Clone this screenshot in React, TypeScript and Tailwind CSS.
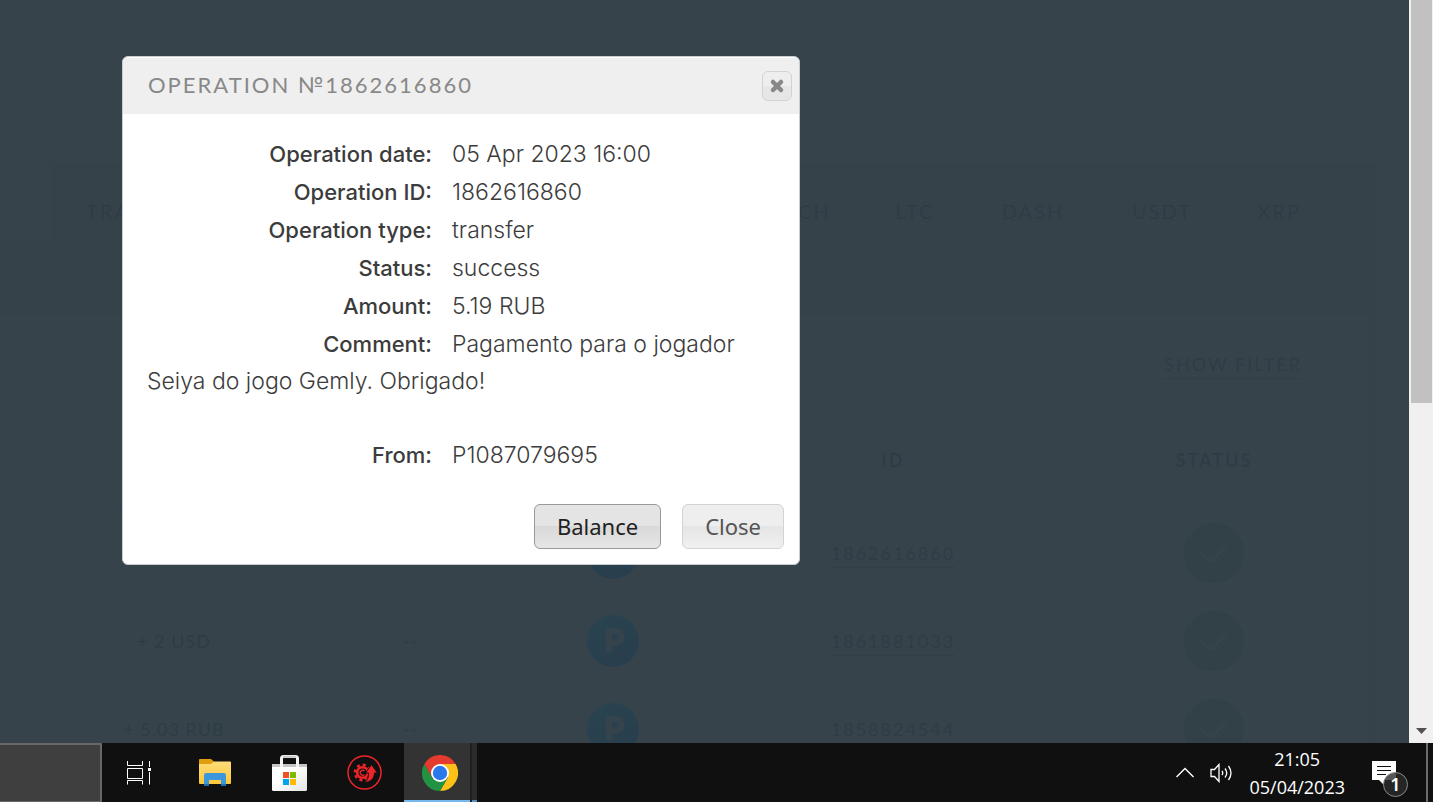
import React from 'react';

const tabs = [
  { label: 'BCH', width: 'w-[124px]' },
  { label: 'LTC', width: 'w-[92px]' },
  { label: 'DASH', width: 'w-[144px]' },
  { label: 'USDT', width: 'w-[114px]' },
  { label: 'XRP', width: 'w-[120px]' }
];

const rows = [
  { amount: '+ 5.19 RUB', id: '1862616860' },
  { amount: '+ 2 USD', id: '1861881033' },
  { amount: '+ 5.03 RUB', id: '1858824544' }
];

const details = [
  { label: 'Operation date:', value: '05 Apr 2023 16:00' },
  { label: 'Operation ID:', value: '1862616860' },
  { label: 'Operation type:', value: 'transfer' },
  { label: 'Status:', value: 'success' },
  { label: 'Amount:', value: '5.19 RUB' },
  { label: 'Comment:', value: 'Pagamento para o jogador' }
];

const Detail: React.FC<{ label: string; value: string }> = ({ label, value }) => (
  <div className="flex">
    <dt className="w-[285px] mr-5 text-right text-[22px] font-medium">{label}</dt>
    <dd>{value}</dd>
  </div>
);

const History: React.FC = () => (
  <div className="flex-1 min-w-0 overflow-hidden pt-[163px] pr-[31px] bg-[#37434b] font-['Lato',sans-serif] text-[#303c45]">
    <div className="rounded-tr-lg bg-[#36424a]">
      <div className="flex items-start h-[152px]">
        <div className="w-[52px] h-[78px] rounded-tr-lg bg-[#37434b]" />
        <nav className="flex flex-1 justify-between h-24 items-center pl-[34px] pr-[39px] text-[20px] tracking-[2px]">
          <a href="#transactions">TRANSACTIONS</a>
          <div className="flex text-center">
            {tabs.map((tab) => (
              <a key={tab.label} href={`#${tab.label}`} className={tab.width}>{tab.label}</a>
            ))}
          </div>
        </nav>
      </div>
      <div className="mr-2 pl-[52px] pr-[34px] bg-[#37434b]">
        <div className="flex justify-end h-[98px] items-center pr-[34px]">
          <a href="#filter" className="text-[18px] leading-7 tracking-[2px] border-b border-dotted border-[#2f3a42]">SHOW FILTER</a>
        </div>
        <table className="w-full table-fixed text-center text-[18px] tracking-[2px]">
          <colgroup>
            <col className="w-[19%]" />
            <col className="w-[18%]" />
            <col className="w-[13%]" />
            <col className="w-[31%]" />
            <col className="w-[19%]" />
          </colgroup>
          <thead>
            <tr className="h-24 border-b border-[#35414a]">
              <th />
              <th />
              <th />
              <th>ID</th>
              <th>STATUS</th>
            </tr>
          </thead>
          <tbody>
            {rows.map((row) => (
              <tr key={row.id} className="h-[88px]">
                <td className="tracking-[1px] text-[#2e3d44]">{row.amount}</td>
                <td>--</td>
                <td className="pl-1">
                  <svg className="mx-auto" width="52" height="52" viewBox="0 0 52 52">
                    <defs>
                      <linearGradient id="coin" x1="0" y1="0" x2="0.6" y2="1">
                        <stop offset="0" stopColor="#294450" />
                        <stop offset="1" stopColor="#293e4e" />
                      </linearGradient>
                    </defs>
                    <circle cx="26" cy="26" r="26" fill="url(#coin)" />
                    <path d="M18.500 13h10a8.500 8.500 0 0 1 0 18H25v6h-6.500zM25 19v6h3a3 3 0 0 0 0-6z" fill="#35434d" fillRule="evenodd" />
                  </svg>
                </td>
                <td>
                  <a href={`#${row.id}`} className="inline-block leading-7 border-b border-dotted border-[#2f3a42]">{row.id}</a>
                </td>
                <td>
                  <svg className="mx-auto" width="60" height="60" viewBox="0 0 60 60">
                    <circle cx="30" cy="30" r="30" fill="#324047" />
                    <path d="M17 30l10 9 15-16" fill="none" stroke="#36434a" strokeWidth="3" strokeLinecap="round" strokeLinejoin="round" />
                  </svg>
                </td>
              </tr>
            ))}
          </tbody>
        </table>
      </div>
    </div>
  </div>
);

const OperationDialog: React.FC = () => (
  <div role="dialog" aria-labelledby="dialog-title" className="absolute left-[122px] top-[56px] w-[678px] rounded-md border border-[#c9cccf] bg-white overflow-hidden">
    <div className="flex items-center justify-between h-14 mt-px pl-[25px] pr-[7px] bg-[#efefef]">
      <h2 id="dialog-title" className="pb-[3px] font-['Lato',sans-serif] text-[22px] tracking-[2px] text-[#888]">OPERATION №1862616860</h2>
      <button aria-label="close" className="flex items-center justify-center w-[30px] h-[30px] rounded-md border border-[#d3d3d3] bg-linear-to-b from-[#eee] from-50% to-[#e6e6e6] to-50%">
        <svg width="16" height="16" viewBox="0 0 16 16">
          <path d="M4 4l8 8M12 4l-8 8" stroke="#888" strokeWidth="4.500" strokeLinecap="round" />
        </svg>
      </button>
    </div>
    <dl className="px-6 pt-[22px] pb-[30px] space-y-px font-['Inter',sans-serif] text-[23px] leading-[37px] font-light text-[#3c3c3c]">
      {details.map((detail) => (
        <Detail key={detail.label} label={detail.label} value={detail.value} />
      ))}
      <dd className="-mt-px">Seiya do jogo Gemly. Obrigado!</dd>
      <div className="pt-9">
        <Detail label="From:" value="P1087079695" />
      </div>
    </dl>
    <div className="flex justify-end gap-[21px] pr-[15px] pb-[15px] font-['Noto_Sans',sans-serif] text-[22px] leading-[43px]">
      <button className="px-[22px] rounded-md border border-[#999] bg-linear-to-b from-[#e4e4e4] from-50% via-[#d9d9d9] via-50% to-[#e6e6e6] text-[#212121]">Balance</button>
      <button className="px-[22px] rounded-md border border-[#d3d3d3] bg-linear-to-b from-[#eee] from-50% via-[#e5e5e5] via-50% to-[#f0f0f0] text-[#555]">Close</button>
    </div>
  </div>
);

const Scrollbar: React.FC = () => (
  <div className="flex flex-col justify-between items-center w-6 pl-px bg-[#f0f0f0]">
    <div className="w-[21px] h-[403px] bg-[#c1c1c1]" />
    <svg className="mb-[9px]" width="11" height="6" viewBox="0 0 11 6">
      <path d="M0 0h11L5.500 6z" fill="#505050" />
    </svg>
  </div>
);

const TaskViewIcon = () => (
  <svg width="26" height="24" viewBox="0 0 26 24" fill="none" stroke="#fff">
    <path d="M.5 0v4.500h15V0M.5 7.500h15v10H.5zM.5 23.500v-4h15v4M22.500 0v6M22.500 11v12.500" />
    <path d="M21 7h3v3h-3z" fill="#fff" stroke="none" />
  </svg>
);

const FolderIcon = () => (
  <svg width="32" height="28" viewBox="0 0 32 28">
    <defs>
      <linearGradient id="folder" x1="0" y1="0" x2="0" y2="1">
        <stop offset="0" stopColor="#ffdc7a" />
        <stop offset="1" stopColor="#fcc839" />
      </linearGradient>
    </defs>
    <path d="M1 0h11l3 2.500V6H0V1a1 1 0 0 1 1-1z" fill="#e09f0a" />
    <path d="M0 5h12l3-2.500h16a1 1 0 0 1 1 1V24a1 1 0 0 1-1 1H1a1 1 0 0 1-1-1z" fill="url(#folder)" />
    <path d="M7 14h18a2 2 0 0 1 2 2v11h-5v-6H10v6H5V16a2 2 0 0 1 2-2z" fill="#3c97dd" />
    <path d="M5 25h5v2H5zM22 25h5v2h-5z" fill="#1b6fb2" />
  </svg>
);

const StoreIcon = () => (
  <svg width="35" height="36" viewBox="0 0 35 36">
    <defs>
      <linearGradient id="bag" x1="0" y1="0" x2="1" y2="1">
        <stop offset="0.4" stopColor="#fff" />
        <stop offset="1" stopColor="#e3e3e3" />
      </linearGradient>
    </defs>
    <path d="M0 9h35v25.500a1.500 1.500 0 0 1-1.500 1.500h-32A1.500 1.500 0 0 1 0 34.500z" fill="url(#bag)" />
    <path d="M0 9h35v3H0z" fill="#c6c6c6" />
    <path d="M9.500 12V3.500a2 2 0 0 1 2-2h12a2 2 0 0 1 2 2V12" fill="none" stroke="#f3f3f3" strokeWidth="3" />
    <path d="M11 .8h13v2H11z" fill="#c9c9c9" />
    <path d="M11 17h6v6h-6z" fill="#f25022" />
    <path d="M18 17h6v6h-6z" fill="#7fba00" />
    <path d="M11 24h6v6h-6z" fill="#00a4ef" />
    <path d="M18 24h6v6h-6z" fill="#ffb900" />
  </svg>
);

const UpdaterIcon = () => (
  <svg width="35" height="35" viewBox="0 0 35 35">
    <circle cx="17.500" cy="17.500" r="16.500" fill="none" stroke="#ee2429" strokeWidth="1.500" />
    <circle cx="15.500" cy="17.500" r="5.300" fill="none" stroke="#ee2429" strokeWidth="2.600" />
    <circle cx="15.500" cy="17.500" r="7.600" fill="none" stroke="#ee2429" strokeWidth="2.600" strokeDasharray="3 2.970" />
    <path d="M17.500 19.500a2.500 2.500 0 1 1 0-3.500" fill="none" stroke="#ee2429" strokeWidth="1.400" />
    <path d="M17 27.500c3.500-2 4.500-5 4.500-9.500h-3l6-8.500 6 8.500h-3c0 5.500-4 9.500-10.500 9.500z" fill="#ee2429" stroke="#101010" strokeWidth="1" />
  </svg>
);

const ChromeIcon = () => (
  <svg width="36" height="36" viewBox="0 0 36 36">
    <path d="M18 9h15.600A18 18 0 0 1 18 36l7.800-13.500z" fill="#fcc117" />
    <path d="M2.400 9l7.800 13.500L18 27l7.800-4.500L18 36A18 18 0 0 1 2.400 9z" fill="#229342" />
    <path d="M10.200 22.500L2.400 9A18 18 0 0 1 33.600 9H18z" fill="#e33b2e" />
    <circle cx="18" cy="18" r="9" fill="#fff" />
    <circle cx="18" cy="18" r="7.200" fill="#2a79ea" />
  </svg>
);

const taskbarIcons = [
  { name: 'Task View', icon: <TaskViewIcon /> },
  { name: 'File Explorer', icon: <FolderIcon /> },
  { name: 'Microsoft Store', icon: <StoreIcon /> },
  { name: 'Driver Booster', icon: <UpdaterIcon /> }
];

const Taskbar: React.FC = () => (
  <div className="flex h-[59px] bg-[#101010]">
    <div className="w-[102px] border-t-2 border-r-2 border-b border-[#686868] bg-[#3f3f3f]" />
    {taskbarIcons.map((item) => (
      <button key={item.name} aria-label={item.name} className="flex items-center justify-center w-[75px]">
        {item.icon}
      </button>
    ))}
    <div className="flex gap-0.5 ml-0.5 bg-[#202020]">
      <button aria-label="Google Chrome" className="flex items-center justify-center w-[66px] pl-[6px] pt-0.5 bg-[#333] border-b-2 border-[#76b9ed]">
        <ChromeIcon />
      </button>
      <div className="w-[5px] bg-[#2b2b2b] border-b-2 border-[#5a8db5]" />
    </div>
    <div className="flex items-center ml-auto">
      <button aria-label="Show hidden icons" className="mr-4">
        <svg width="18" height="11" viewBox="0 0 18 11">
          <path d="M.5 10L9 1.500l8.500 8.500" fill="none" stroke="#fff" strokeWidth="1.400" />
        </svg>
      </button>
      <button aria-label="Volume" className="mr-[15px]">
        <svg width="24" height="20" viewBox="0 0 24 20" fill="none" stroke="#fff" strokeWidth="1.300">
          <path d="M1 6.500h3.500L9 1.500v17L4.500 13.500H1z" />
          <path d="M12 8q1.500 2 0 4M15 5.500q3.500 4.500 0 9M18.500 3q5 7 0 14" />
        </svg>
      </button>
      <div className="mr-[27px] text-center font-['Open_Sans',sans-serif] text-[18px] leading-7 text-white">
        <div>21:05</div>
        <div>05/04/2023</div>
      </div>
      <button aria-label="Notifications" className="relative mr-[30px]">
        <svg width="24" height="24" viewBox="0 0 24 24">
          <path d="M0 0h24v19H12v5l-5-5H0z" fill="#fff" />
          <path d="M5 5.500h14M5 9.500h14M5 13.500h9" stroke="#101010" />
        </svg>
        <span className="absolute left-[11px] top-[11px] w-[25px] h-[25px] rounded-full border border-[#8a8a8a] bg-[#2b2b2b]/80 font-['Noto_Sans',sans-serif] text-[18px] leading-[23px] font-semibold text-white">1</span>
      </button>
      <div className="w-0.5 h-[59px] mr-[5px] bg-[#6b6b6b]" />
    </div>
  </div>
);

const App: React.FC = () => {
  return (
    <div className="flex flex-col h-screen overflow-hidden">
      <div className="relative flex flex-1 min-h-0">
        <History />
        <Scrollbar />
        <OperationDialog />
      </div>
      <Taskbar />
    </div>
  );
};

export default App;
